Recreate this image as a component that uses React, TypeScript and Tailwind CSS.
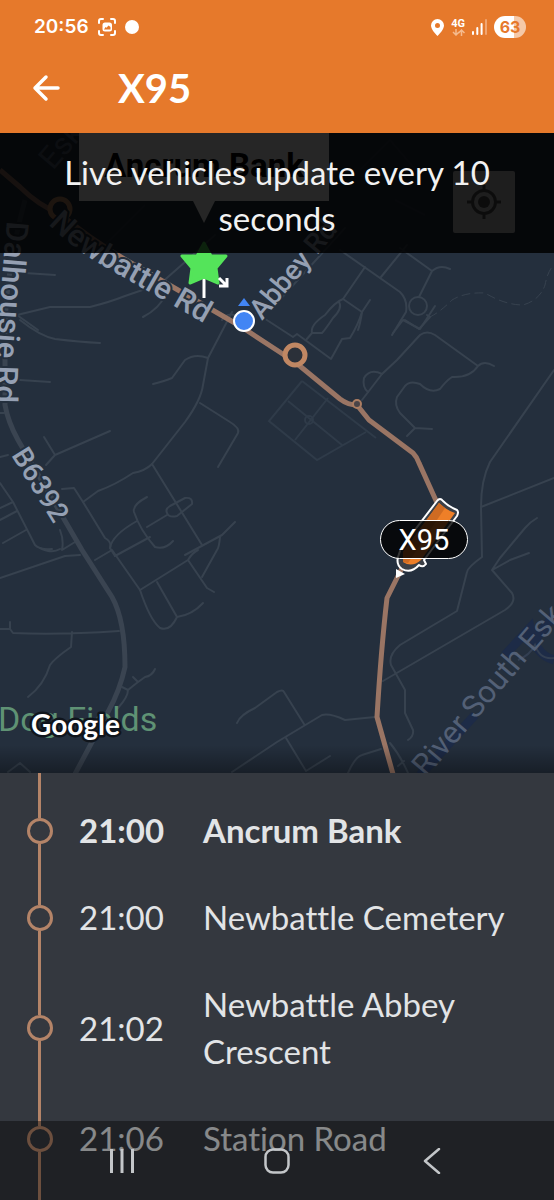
import React from "react";

type Stop = { time: string; name: string; current?: boolean };

const stops: Stop[] = [
  { time: "21:00", name: "Ancrum Bank", current: true },
  { time: "21:00", name: "Newbattle Cemetery" },
  { time: "21:02", name: "Newbattle Abbey Crescent" },
  { time: "21:06", name: "Station Road" },
];

// Side streets, drawn thin
const streets = [
  "M17 315L50 307H90Q110 302 125 296L160 284L185 262L215 235",
  "M25 273L55 275M17 315L38 330M143 317Q160 308 165 295",
  "M20 320Q40 336 55 339Q80 342 100 343M20 380L50 382",
  "M232 312L208 358L203 385Q201 400 185 422L152 464Q145 471 133 473Q115 485 98 491L83 502",
  "M208 358Q195 353 185 360L172 378Q165 381 153 384",
  "M200 403L230 422Q240 428 238 433L218 467",
  "M110 431L55 455L44 437M55 455L46 465",
  "M152 464L202 545",
  "M62 489L74 488L83 502L105 538Q112 542 110 548L115 556",
  "M167 513Q165 509 170 506L185 498Q193 497 192 504L177 516Q169 518 167 513Z",
  "M147 497Q132 505 134 512Q140 530 155 547Q165 550 173 541",
  "M110 548Q112 535 137 521M147 527L167 515M115 556L150 537M185 555L222 535L235 522M220 537Q219 548 217 550L202 577",
  "M0 483L13 502L35 545Q40 550 52 549M0 508L13 502M0 520L17 511M3 543L26 530M60 530Q64 540 62 550L75 542M0 457L8 455M0 413H4",
  "M0 578L65 556L80 555M40 548Q52 554 60 549",
  "M95 560L112 550L140 590Q150 620 160 628Q170 632 177 617L157 582",
  "M140 590L188 560Q192 553 198 550M188 560L207 588L214 592M177 617Q192 615 203 603",
  "M0 629H10L13 633Q60 635 119 631M10 622V629M72 632L71 647Q55 658 50 665Q44 685 28 697",
  "M155 669Q152 676 145 677Q135 684 128 690L122 687M128 690Q128 697 118 708M133 677L138 682",
  "M237 723Q240 715 255 708L277 692Q283 689 284 692L304 724M8 772L20 763L30 772M232 772L277 742L322 715Q330 713 345 720L375 717",
  "M286 738L306 771L330 756M348 773Q355 757 362 755L381 749M390 743Q400 755 408 773M398 766L404 761",
  "M554 370L490 462Q481 480 481 507L482 557Q468 567 467 572L457 611L400 645Q388 655 391 665L405 690V713L413 730Q414 736 408 740",
  "M383 681L505 610Q517 602 512 593L492 570L500 558L525 528Q530 522 537 518M494 569L510 560L529 553M481 507L554 478",
  "M393 333L403 320L420 329L435 306",
  "M362 400L382 374L397 360L420 335Q427 330 435 335L478 366Q470 378 452 377Q446 381 440 389Q430 394 420 384Q410 380 405 386L397 397Q394 405 400 413L415 428L432 429M415 428L407 436M478 366Q484 360 494 366",
  "M382 374Q370 368 364 378Q362 387 368 392",
  "M256 313L293 337L297 334L331 359L342 339L350 338Q358 325 362 312",
  "M306 340L312 333L322 333Q325 330 333 318Q343 308 339 302M312 333Q310 325 325 315Q335 302 343 299",
  "M340 250L400 292Q408 300 406 312L392 335M365 267L343 299L362 312Q360 325 358 330M362 312L370 300",
  "M381 277L407 245M400 248L432 271L419 297M432 271Q440 264 450 269M427 315L430 317L419 329L405 320",
  "M277 303L345 228M222 320Q228 308 250 322",
];

const cemeteryPaths = [
  "M302 381L376 438M302 381L269 421L317 460L366 432M288 401L342 445M328 398L295 440",
  "M105 245L145 205M360 170L390 140L420 175M395 200L425 215",
];

const StatusBar = () => (
  <div className="flex h-[54px] items-center justify-between pl-[34px] pr-[28px] text-white">
    <div className="flex items-center gap-2">
      <span className="font-[Inter,sans-serif] text-[19px] leading-6 font-semibold">20:56</span>
      <svg className="size-5" viewBox="0 0 20 20" fill="none" stroke="currentColor" strokeWidth="2" strokeLinecap="round" aria-hidden="true">
        <path d="M2 6V4Q2 2 4 2H6M14 2H16Q18 2 18 4V6M18 14V16Q18 18 16 18H14M6 18H4Q2 18 2 16V14" />
        <path fillRule="evenodd" d="M8 5.500H12.500Q15 5.500 15 8V12Q15 14.500 12.500 14.500H8Q5.500 14.500 5.500 12V8Q5.500 5.500 8 5.500ZM7 12.500H13.500V10L11.500 8.500L9.500 10.800L8.500 10Z" fill="currentColor" stroke="none" />
      </svg>
      <span className="size-[14px] rounded-full bg-white" />
    </div>

    <div className="flex items-center gap-[7px]">
      <svg className="h-[17px] w-[13px]" viewBox="0 0 13 17" fill="currentColor" aria-hidden="true">
        <path fillRule="evenodd" d="M6.500 0A6.500 6.500 0 0 1 13 6.500C13 10 9 14.500 6.500 17C4 14.500 0 10 0 6.500A6.500 6.500 0 0 1 6.500 0ZM6.500 4A2.500 2.500 0 1 0 6.500 9A2.500 2.500 0 1 0 6.500 4Z" />
      </svg>
      <div className="flex flex-col items-center">
        <span className="font-[Roboto,sans-serif] text-[11px] leading-[10px] font-bold">4G</span>
        <svg className="h-[7px] w-[13px]" viewBox="0 0 13 7" fill="none" stroke="#f5bb8e" strokeWidth="1.500" aria-hidden="true">
          <path d="M4 0V6M1 3L4 6L7 3M9.500 7V1M6.500 4L9.500 1L12.500 4" />
        </svg>
      </div>
      <svg className="h-[16px] w-[15px]" viewBox="0 0 15 16" fill="none" stroke="#fff" strokeWidth="2" strokeLinecap="round" aria-hidden="true">
        <path d="M1 13V15M5.300 9V15M9.600 5V15" />
        <path d="M14 1V15" stroke="#f1a570" />
      </svg>
      <span className="flex h-[22px] w-[32px] items-center justify-center rounded-full bg-linear-to-r from-white from-63% to-[#f5c9a8] to-63% font-[Inter,sans-serif] text-[16px] font-bold text-[#e6792b]">
        63
      </span>
    </div>
  </div>
);

const Header = () => (
  <header className="shrink-0 bg-[#e6792b] pb-[11px] text-white">
    <StatusBar />
    <div className="flex h-[68px] items-center gap-[58px] pl-[32px]">
      <button type="button" aria-label="Back">
        <svg className="size-[28px]" viewBox="0 0 28 28" fill="none" stroke="currentColor" strokeWidth="3.500" strokeLinecap="round" strokeLinejoin="round">
          <path d="M26 14H3M14 3L3 14L14 25" />
        </svg>
      </button>
      <h1 className="text-[40px] leading-[48px] font-bold">X95</h1>
    </div>
  </header>
);

const MapCanvas = () => (
  <svg
    className="block size-full font-[Roboto,sans-serif]"
    viewBox="0 133 554 640"
    preserveAspectRatio="xMidYMid slice"
    fill="none"
    role="img"
    aria-label="Route map"
  >
    <defs>
      <path id="newbattle" d="M48 224Q72 248 100 264L230 338" />
      <path id="abbey" d="M262 321L345 222" />
      <path id="dalhousie" d="M7 221Q3 260 0 310Q-5 360 -5 430" />
      <path id="b6392" d="M11 455L66 544" />
      <path id="river" d="M426 778L582 596" />
      <path id="esk" d="M53 171L100 116" />
    </defs>
    <rect y="133" width="554" height="640" fill="#242f3d" />

    {/* river */}
    <path d="M420 775L475 715M505 655L530 628Q535 655 554 660M535 640L554 615" stroke="#1d2b47" strokeWidth="9" />
    <path d="M518 660Q530 655 535 645Q540 660 554 658" stroke="#333f52" strokeWidth="2" />

    {/* roads */}
    <g stroke="#37424f" strokeWidth="2" strokeLinejoin="round" strokeLinecap="round">
      {streets.map((d) => (
        <path key={d} d={d} />
      ))}
      <circle cx="418" cy="306" r="9" />
      <path d="M430 317Q440 312 452 300Q465 292 485 293Q505 305 523 305Q540 300 545 285Q548 270 554 265" strokeDasharray="8 5" strokeWidth="1" />
    </g>
    <g stroke="#2f3b49" strokeWidth="2">
      {cemeteryPaths.map((d) => (
        <path key={d} d={d} />
      ))}
      <circle cx="309" cy="420" r="4" />
    </g>
    <path d="M25 200Q6 270 5 330V405Q8 422 18 440L82 550L112 597Q125 620 125 667Q120 690 108 712L75 774" stroke="#3a4451" strokeWidth="5" />

    {/* route */}
    <path
      d="M0 170L20 187Q38 205 60 214Q95 243 140 268L178 290L240 326L295 362L340 399Q348 405 357 405L369 420L413 453Q417 457 419 463L438 505L402 568L387 598Q381 650 377 717L393 774"
      stroke="#9a7564"
      strokeWidth="5"
      strokeLinejoin="round"
    />
    <circle cx="357" cy="404" r="4" fill="#4a4448" stroke="#ab7d62" strokeWidth="2" />
    <circle cx="60" cy="209" r="10" fill="#242f3d" stroke="#c48a64" strokeWidth="5" />
    <circle cx="295" cy="355" r="10" fill="#2b3039" stroke="#c08763" strokeWidth="5" />

    {/* labels */}
    <g fill="#95a0b3" stroke="#242f3d" strokeWidth="4" strokeLinejoin="round" paintOrder="stroke" className="font-medium">
      <text className="text-[31px]">
        <textPath href="#newbattle">Newbattle Rd</textPath>
      </text>
      <text className="text-[28px]">
        <textPath href="#abbey">Abbey Rd</textPath>
      </text>
      <text className="text-[31px]">
        <textPath href="#dalhousie">Dalhousie Rd</textPath>
      </text>
      <text className="text-[28px]">
        <textPath href="#b6392">B6392</textPath>
      </text>
    </g>
    <g fill="#536076" className="text-[31px]">
      <text>
        <textPath href="#river">River South Esk</textPath>
      </text>
      <text>
        <textPath href="#esk">Esk</textPath>
      </text>
    </g>
    <text x="-2" y="731" fill="#5f9274" className="text-[34px]">
      Dog Fields
    </text>
    <text x="31" y="735" fill="#fff" stroke="#10151c" strokeWidth="5" strokeLinejoin="round" paintOrder="stroke" className="font-[Lato,sans-serif] text-[28px] font-bold">
      Google
    </text>

    {/* selected stop */}
    <path d="M204 279V298" stroke="#fff" strokeWidth="3" />
    <path d="M204 243L211 256L226 256L216 268L218 283L204 277L190 283L192 268L182 256L197 256Z" fill="#54e45a" stroke="#54e45a" strokeWidth="3" strokeLinejoin="round" />
    <path d="M219 278L227 286M227 278V286H219" stroke="#fff" strokeWidth="3" />

    {/* own position */}
    <path d="M244 298L250 306H238Z" fill="#4285f4" />
    <circle cx="244" cy="321" r="10" fill="#4285f4" stroke="#fff" strokeWidth="2" />

    {/* bus */}
    <path d="M396 569L405 574L396 578Z" fill="#fff" />
    <path
      d="M437 501Q440 497 443 501Q449 507 457 510Q459 512 457 516L424 560L426 564Q423 568 419 565Q411 574 402 569Q396 565 398 557L401 548Z"
      fill="#3c4047"
      stroke="#fff"
      strokeWidth="2"
      strokeLinejoin="round"
    />
    <path d="M439 503Q446 510 455 513L421 560Q412 568 403 562L403 552Z" fill="#ee7f28" />
    <path d="M439 503L445 508L408 563L403 562V552Z" fill="#cf6b22" />
    <rect x="380.500" y="520.500" width="87" height="38" rx="19" fill="#000" fillOpacity="0.8" stroke="#fff" />
    <text x="424" y="550" textAnchor="middle" fill="#fff" className="text-[29px]">
      X95
    </text>
  </svg>
);

const LiveMap = () => (
  <section className="relative h-[640px] shrink-0 overflow-hidden">
    <MapCanvas />

    {/* stop callout */}
    <div className="absolute top-0 left-[79px] flex flex-col items-center">
      <div className="h-[68px] w-[250px] bg-white pt-[13px] text-center font-[Roboto,sans-serif] text-[33px] leading-[40px] font-bold text-black">
        Ancrum Bank
      </div>
      <svg className="h-[22px] w-[22px]" viewBox="0 0 22 22" fill="#fff" aria-hidden="true">
        <path d="M0 0H22L11 22Z" />
      </svg>
    </div>

    <button type="button" aria-label="My location" className="absolute top-[38px] right-[39px] flex size-[62px] items-center justify-center rounded-xs bg-[#c8c8c8]">
      <svg className="size-[34px] text-[#555]" viewBox="0 0 34 34" fill="none" stroke="currentColor" strokeWidth="3">
        <circle cx="17" cy="17" r="11.500" />
        <circle cx="17" cy="17" r="6" fill="currentColor" stroke="none" />
        <path d="M17 0V5M17 29V34M0 17H5M29 17H34" />
      </svg>
    </button>

    <p className="absolute inset-x-0 top-0 bg-black/85 px-4 pt-[16px] pb-[12px] text-center text-[33px] leading-[46px] text-[#f2f2f2]">
      Live vehicles update every 10 seconds
    </p>

    <div className="absolute inset-x-0 bottom-0 h-7 bg-linear-to-b from-transparent to-black/35" />
  </section>
);

const StopRow = ({ time, name, current }: Stop) => (
  <li className={current ? "flex items-center font-bold" : "flex items-center"}>
    <div className="flex w-[79px] shrink-0 flex-col items-center self-stretch">
      <span className="w-[3px] flex-1 bg-[#b48468]" />
      <span className="size-[26px] rounded-full border-3 border-[#b48468]" />
      <span className="w-[3px] flex-1 bg-[#b48468]" />
    </div>
    <time className="w-[124px] shrink-0 py-5">{time}</time>
    <span className="max-w-[320px] py-5">{name}</span>
  </li>
);

const StopList = () => (
  <section className="flex min-h-0 flex-1 flex-col overflow-hidden bg-[#34383f] text-[33px] leading-[47px] text-[#e2e4e6] [font-variant-ligatures:none]">
    <div className="flex h-[14px] w-[79px] shrink-0 justify-center">
      <span className="w-[3px] bg-[#b48468]" />
    </div>
    <ul className="shrink-0">
      {stops.map((stop) => (
        <StopRow key={stop.name} {...stop} />
      ))}
    </ul>
    <div className="flex w-[79px] flex-1 justify-center">
      <span className="w-[3px] bg-[#b48468]" />
    </div>
  </section>
);

const NavBar = () => (
  <nav className="absolute inset-x-0 bottom-0 flex h-[79px] items-center justify-center bg-black/40 text-[#c3c6c9]">
    <button type="button" aria-label="Recent apps" className="flex w-[155px] justify-center">
      <svg className="size-[26px]" viewBox="0 0 26 26" fill="none" stroke="currentColor" strokeWidth="3">
        <path d="M2.500 1V25M13 1V25M23.500 1V25" />
      </svg>
    </button>
    <button type="button" aria-label="Home" className="flex w-[155px] justify-center">
      <svg className="size-[26px]" viewBox="0 0 26 26" fill="none" stroke="currentColor" strokeWidth="2.500">
        <rect x="1.500" y="1.500" width="23" height="23" rx="7.500" />
      </svg>
    </button>
    <button type="button" aria-label="Back" className="flex w-[155px] justify-center">
      <svg className="size-[26px]" viewBox="0 0 26 26" fill="none" stroke="currentColor" strokeWidth="2.500" strokeLinecap="round" strokeLinejoin="round">
        <path d="M20 1L6 13L20 25" />
      </svg>
    </button>
  </nav>
);

const App = () => (
  <div className="relative flex h-screen flex-col overflow-hidden bg-[#34383f] font-[Lato,sans-serif]">
    <Header />
    <LiveMap />
    <StopList />
    <NavBar />
  </div>
);

export default App;
